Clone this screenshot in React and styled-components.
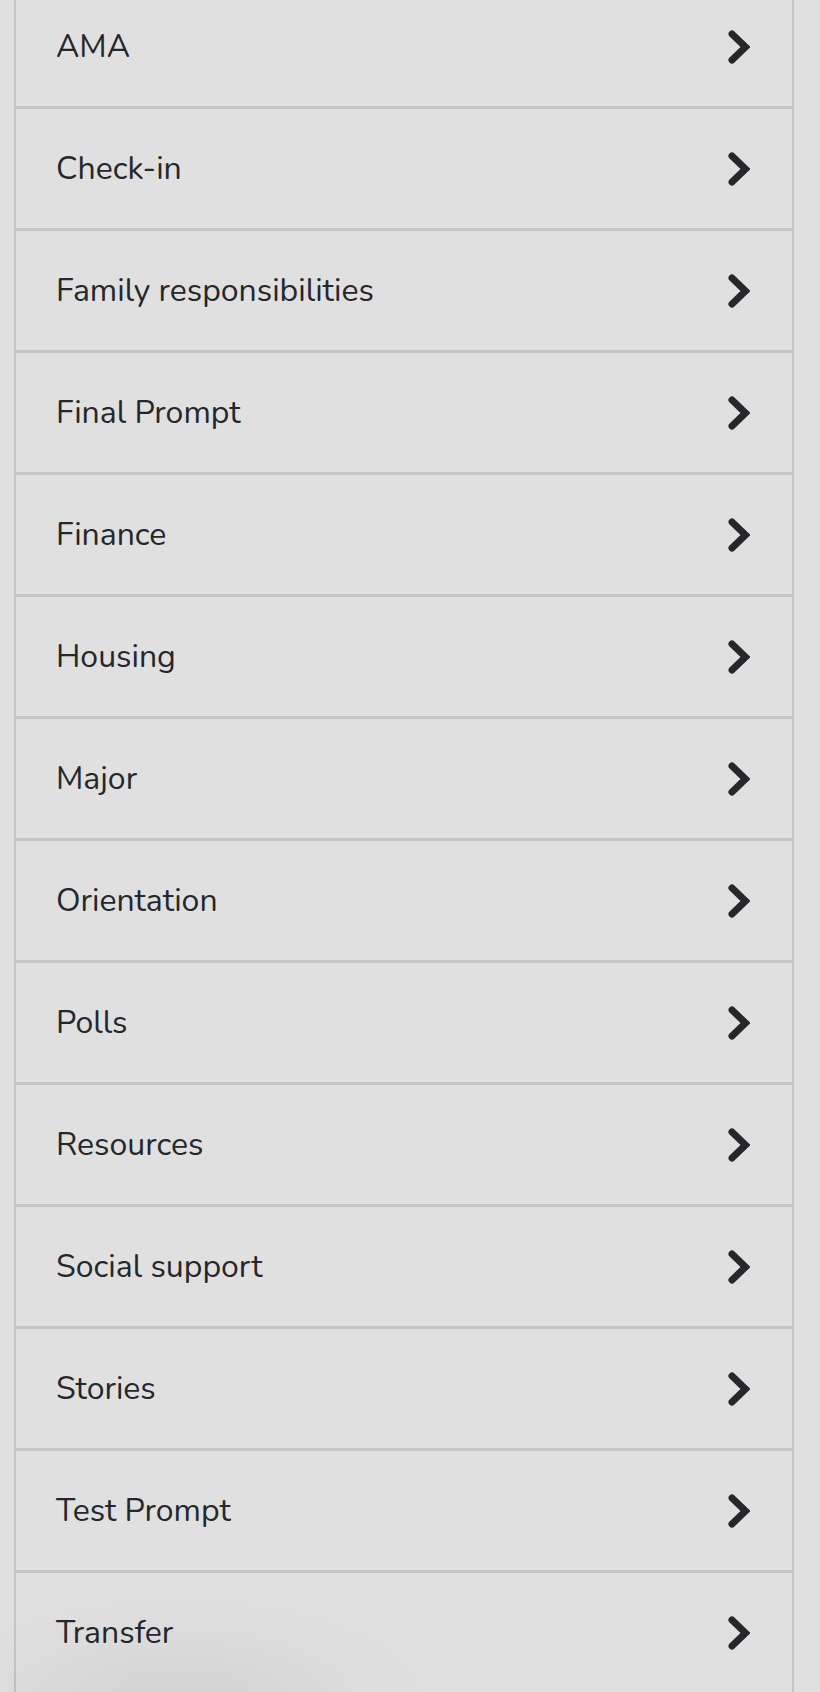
import React from "react";
import styled, { createGlobalStyle } from "styled-components";

const topics = [
  "AMA",
  "Check-in",
  "Family responsibilities",
  "Final Prompt",
  "Finance",
  "Housing",
  "Major",
  "Orientation",
  "Polls",
  "Resources",
  "Social support",
  "Stories",
  "Test Prompt",
  "Transfer",
];

const GlobalStyle = createGlobalStyle`
  html, body {
    margin: 0;
    padding: 0;
    background: #e0e0e0;
    overflow: hidden;
  }
`;

// bold chevron with rounded ends
const Chevron = () => (
  <ChevronIcon viewBox="0 0 22 34" aria-hidden="true">
    <polyline
      points="4,4 17.5,17 4,30"
      fill="none"
      stroke="currentColor"
      strokeWidth="7"
      strokeLinecap="round"
      strokeLinejoin="miter"
    />
  </ChevronIcon>
);

const App = () => {
  return (
    <Page>
      <GlobalStyle />
      <TopicList>
        {topics.map((name) => (
          <TopicRow key={name}>
            <TopicName>{name}</TopicName>
            <Chevron />
          </TopicRow>
        ))}
      </TopicList>
      <Shade />
    </Page>
  );
};

const Page = styled.div`
  position: relative;
  height: 1692px;
  overflow: hidden;
  background: #e0e0e0;
`;

const TopicList = styled.ul`
  list-style: none;
  margin: -13px 0 0 14px;
  padding: 0;
  width: 776px;
  border-left: 2px solid #c4c4c4;
  border-right: 2px solid #c4c4c4;
`;

const TopicRow = styled.li`
  display: flex;
  align-items: center;
  justify-content: space-between;
  height: 119px;
  padding: 0 42px 0 40px;
  border-bottom: 3px solid #c4c4c4;
  cursor: pointer;
`;

const TopicName = styled.span`
  font-family: "Nunito", "Lato", sans-serif;
  font-size: 32px;
  color: #25272b;
`;

const ChevronIcon = styled.svg`
  width: 22px;
  height: 34px;
  color: #25272b;
  flex-shrink: 0;
`;

const Shade = styled.div`
  position: absolute;
  left: -80px;
  bottom: -120px;
  width: 520px;
  height: 220px;
  border-radius: 50%;
  background: radial-gradient(closest-side, rgba(0, 0, 0, 0.06), rgba(0, 0, 0, 0));
  pointer-events: none;
`;

export default App;
